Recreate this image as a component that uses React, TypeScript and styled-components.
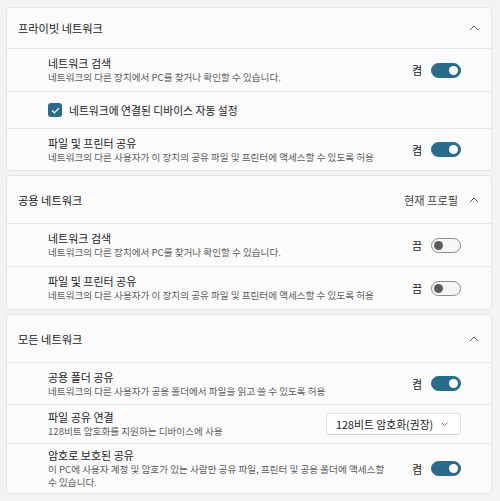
import { FC } from "react";
import styled, { createGlobalStyle } from "styled-components";

const GlobalStyle = createGlobalStyle`
	body {
		margin: 0;
		background: #f3f3f3;
		font-family: "Noto Sans CJK KR", "Noto Sans", sans-serif;
		color: #1b1b1b;
	}
`;

const StyledPage = styled.div`
	display: flex;
	flex-direction: column;
	gap: 4px;
	padding: 7px 8px 0 6px;
	width: 500px;
	height: 501px;
	box-sizing: border-box;
	overflow: hidden;
`;

const StyledCard = styled.section`
	background: #fbfbfb;
	border: 1px solid #e5e5e5;
	border-radius: 4px;
	display: flex;
	flex-direction: column;
`;

const StyledHeader = styled.div<{ $h: number }>`
	height: ${(p) => p.$h}px;
	display: flex;
	align-items: center;
	justify-content: space-between;
	padding: 0 12px 0 11px;
	font-size: 11.2px;
`;

const StyledHeaderRight = styled.div`
	display: flex;
	align-items: center;
	gap: 11px;
	color: #444;
`;

const StyledRow = styled.div<{ $h: number }>`
	height: ${(p) => p.$h}px;
	box-sizing: border-box;
	border-top: 1px solid #e8e8e8;
	display: flex;
	align-items: center;
	justify-content: space-between;
	padding: 0 30px 0 41px;
`;

const StyledText = styled.div`
	display: flex;
	flex-direction: column;
	max-width: 340px;
`;

const StyledTitle = styled.div`
	font-size: 11px;
	line-height: 15px;
	color: #1b1b1b;
`;

const StyledSub = styled.div`
	font-size: 9.6px;
	line-height: 13px;
	color: #5c5c5c;
`;

const StyledControl = styled.div`
	display: flex;
	align-items: center;
	gap: 9px;
	font-size: 11px;
	color: #1b1b1b;
`;

const StyledToggle = styled.div<{ $on: boolean }>`
	width: 30px;
	height: 15px;
	box-sizing: border-box;
	border-radius: 8px;
	border: 1px solid ${(p) => (p.$on ? "#2a6b8b" : "#8c8c8c")};
	background: ${(p) => (p.$on ? "#2a6b8b" : "#f6f6f6")};
	display: flex;
	align-items: center;
	justify-content: ${(p) => (p.$on ? "flex-end" : "flex-start")};
	padding: 0 2px;

	&::after {
		content: "";
		width: 9px;
		height: 9px;
		border-radius: 50%;
		background: ${(p) => (p.$on ? "#ffffff" : "#5b5b5b")};
	}
`;

const StyledCheckLabel = styled.label`
	display: flex;
	align-items: center;
	gap: 7px;
	font-size: 10.8px;
	color: #1b1b1b;
`;

const StyledCheckbox = styled.span`
	width: 14px;
	height: 14px;
	border-radius: 3px;
	background: #2a6b8b;
	display: flex;
	align-items: center;
	justify-content: center;
`;

const StyledSelect = styled.div`
	width: 135px;
	height: 22px;
	box-sizing: border-box;
	border: 1px solid #e3e3e3;
	border-bottom-color: #d6d6d6;
	border-radius: 4px;
	background: #ffffff;
	display: flex;
	align-items: center;
	justify-content: space-between;
	padding: 0 12px 0 9px;
	font-size: 10.8px;
	color: #1b1b1b;
`;

const ChevronUp: FC = () => (
	<svg width="10" height="6" viewBox="0 0 10 6">
		<path d="M1 5 L5 1 L9 5" fill="none" stroke="#555" strokeWidth="1" />
	</svg>
);

const ChevronDown: FC = () => (
	<svg width="7" height="4" viewBox="0 0 7 4">
		<path d="M0.5 0.5 L3.5 3.5 L6.5 0.5" fill="none" stroke="#777" strokeWidth="0.9" />
	</svg>
);

const Toggle: FC<{ on: boolean }> = ({ on }) => (
	<StyledControl>
		<span>{on ? "켬" : "끔"}</span>
		<StyledToggle $on={on} />
	</StyledControl>
);

type SettingProps = {
	h: number;
	title: string;
	sub: string;
	on: boolean;
};

const SettingRow: FC<SettingProps> = ({ h, title, sub, on }) => (
	<StyledRow $h={h}>
		<StyledText>
			<StyledTitle>{title}</StyledTitle>
			<StyledSub>{sub}</StyledSub>
		</StyledText>
		<Toggle on={on} />
	</StyledRow>
);

const App: FC = () => {
	return (
		<StyledPage>
			<GlobalStyle />
			<StyledCard>
				<StyledHeader $h={40}>
					<span>프라이빗 네트워크</span>
					<ChevronUp />
				</StyledHeader>
				<SettingRow
					h={43}
					title="네트워크 검색"
					sub="네트워크의 다른 장치에서 PC를 찾거나 확인할 수 있습니다."
					on={true}
				/>
				<StyledRow $h={37}>
					<StyledCheckLabel>
						<StyledCheckbox>
							<svg width="9" height="7" viewBox="0 0 9 7">
								<path d="M1 3.5 L3.4 5.8 L8 1.2" fill="none" stroke="#fff" strokeWidth="1.2" />
							</svg>
						</StyledCheckbox>
						네트워크에 연결된 디바이스 자동 설정
					</StyledCheckLabel>
				</StyledRow>
				<SettingRow
					h={42}
					title="파일 및 프린터 공유"
					sub="네트워크의 다른 사용자가 이 장치의 공유 파일 및 프린터에 액세스할 수 있도록 허용"
					on={true}
				/>
			</StyledCard>

			<StyledCard>
				<StyledHeader $h={47}>
					<span>공용 네트워크</span>
					<StyledHeaderRight>
						<span>현재 프로필</span>
						<ChevronUp />
					</StyledHeaderRight>
				</StyledHeader>
				<SettingRow
					h={43}
					title="네트워크 검색"
					sub="네트워크의 다른 장치에서 PC를 찾거나 확인할 수 있습니다."
					on={false}
				/>
				<SettingRow
					h={43}
					title="파일 및 프린터 공유"
					sub="네트워크의 다른 사용자가 이 장치의 공유 파일 및 프린터에 액세스할 수 있도록 허용"
					on={false}
				/>
			</StyledCard>

			<StyledCard>
				<StyledHeader $h={47}>
					<span>모든 네트워크</span>
					<ChevronUp />
				</StyledHeader>
				<SettingRow
					h={42}
					title="공용 폴더 공유"
					sub="네트워크의 다른 사용자가 공용 폴더에서 파일을 읽고 쓸 수 있도록 허용"
					on={true}
				/>
				<StyledRow $h={39}>
					<StyledText>
						<StyledTitle>파일 공유 연결</StyledTitle>
						<StyledSub>128비트 암호화를 지원하는 디바이스에 사용</StyledSub>
					</StyledText>
					<StyledSelect>
						<span>128비트 암호화(권장)</span>
						<ChevronDown />
					</StyledSelect>
				</StyledRow>
				<SettingRow
					h={50}
					title="암호로 보호된 공유"
					sub="이 PC에 사용자 계정 및 암호가 있는 사람만 공유 파일, 프린터 및 공용 폴더에 액세스할 수 있습니다."
					on={true}
				/>
			</StyledCard>
		</StyledPage>
	);
};

export default App;
